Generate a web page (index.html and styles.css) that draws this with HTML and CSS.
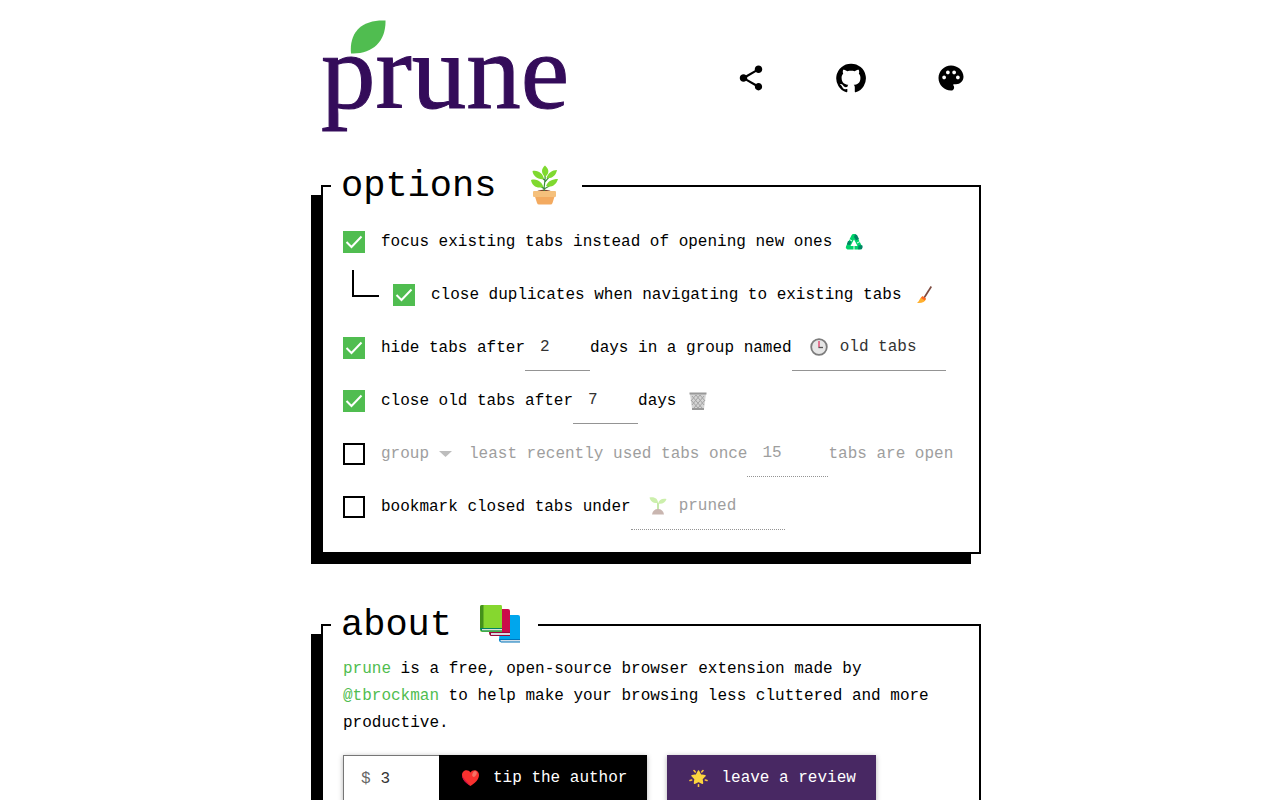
FILE: index.html
```html
<!DOCTYPE html>
<html lang="en">
<head>
<meta charset="utf-8">
<title>prune</title>
<meta name="viewport" content="width=device-width, initial-scale=1">
<link rel="stylesheet" href="styles.css">
</head>
<body>
<main class="page">
  <header class="header">
    <h1 class="logo">prune
      <svg class="leaf" viewBox="0 0 36 34" aria-hidden="true"><path d="M1 33.500C-1 12 12-.5 35.500.500 36 22 22 34.500 1 33.500Z" fill="#50bd50"/></svg>
    </h1>
    <nav class="links">
      <a class="icon-link" href="#share" aria-label="share"><svg viewBox="0 0 24 24"><path d="M18 16.080c-.76 0-1.440.3-1.960.770L8.910 12.700c.05-.23.090-.46.090-.7s-.04-.47-.09-.7l7.050-4.110c.54.5 1.250.810 2.040.810 1.660 0 3-1.340 3-3s-1.340-3-3-3-3 1.340-3 3c0 .24.040.47.090.7L8.040 9.810C7.500 9.310 6.790 9 6 9c-1.660 0-3 1.340-3 3s1.340 3 3 3c.79 0 1.500-.31 2.040-.81l7.120 4.160c-.05.21-.08.43-.08.650 0 1.610 1.310 2.920 2.920 2.920s2.920-1.310 2.920-2.920-1.310-2.920-2.920-2.920z"/></svg></a>
      <a class="icon-link github" href="#github" aria-label="github"><svg viewBox="0 0 24 24"><path d="M12 1.270a11 11 0 00-3.480 21.460c.55.090.73-.28.730-.55v-1.840c-3.030.640-3.670-1.460-3.670-1.460-.55-1.290-1.280-1.650-1.280-1.650-.92-.65.1-.65.1-.65 1.100 0 1.730 1.100 1.730 1.100.92 1.650 2.570 1.200 3.210.920a2 2 0 01.64-1.470c-2.470-.27-5.040-1.190-5.040-5.500 0-1.100.46-2.100 1.200-2.840a3.760 3.760 0 010-2.930s.91-.28 3.110 1.100c1.800-.49 3.700-.49 5.500 0 2.100-1.380 3.020-1.100 3.020-1.100a3.760 3.760 0 01.1 2.930c.83.740 1.200 1.740 1.200 2.940 0 4.210-2.570 5.130-5.040 5.400.45.370.82.920.82 2.020v3.030c0 .27.1.640.73.550A11 11 0 0012 1.270"/></svg></a>
      <a class="icon-link" href="#theme" aria-label="theme"><svg viewBox="0 0 24 24"><path d="M12 2C6.490 2 2 6.490 2 12s4.490 10 10 10c1.380 0 2.500-1.120 2.500-2.500 0-.61-.23-1.200-.64-1.670-.08-.1-.13-.21-.13-.33 0-.28.220-.5.500-.5H16c3.310 0 6-2.690 6-6C22 6.040 17.510 2 12 2zM6.500 13C5.670 13 5 12.330 5 11.500S5.670 10 6.500 10 8 10.670 8 11.500 7.330 13 6.500 13zM9.500 9C8.670 9 8 8.330 8 7.500S8.670 6 9.500 6s1.500.67 1.500 1.500S10.330 9 9.500 9zM14.500 9c-.83 0-1.500-.67-1.500-1.500S13.670 6 14.500 6 16 6.670 16 7.500 15.330 9 14.500 9zM17.500 13c-.83 0-1.500-.67-1.500-1.500s.67-1.500 1.500-1.500 1.500.67 1.500 1.500-.67 1.500-1.500 1.500z"/></svg></a>
    </nav>
  </header>

  <fieldset class="panel">
    <legend class="title">options
      <svg viewBox="0 0 40 40" aria-hidden="true">
        <path d="M9 28Q20 21 31 28Z" fill="#7b4632"/>
        <path d="M20.500 27C19 22 22 16 21 9M20 24Q25 22 28 18M20.500 24Q15 20 13 18M21 17Q24 13 27 10M20.500 15Q16 11 13 9" fill="none" stroke="#3a8c3a" stroke-width="1.200"/>
        <path d="M21 .500C26 5 25 9 21 12 17 8 17 4 21 .500ZM33 5C32 11 27 14 22.500 13 24 8 28 5 33 5ZM8.500 6C15 5 19 9 20 14 14 15 9 11 8.500 6ZM34 14C32 21 26 23 22 21 24 16 28 14 34 14ZM7 15C14 13 18 18 19.500 22 13 24 8 21 7 15Z" fill="#7fd92f"/>
        <path d="M10.500 30h20.500l-2.500 8q-.5 1.500-2 1.500H15q-1.500 0-2-1.500Z" fill="#f3aa60"/>
        <rect x="9" y="26" width="23" height="6" rx="1" fill="#f5c07c"/>
      </svg>
    </legend>

    <div class="row">
      <input class="check" type="checkbox" id="focus" checked>
      <label for="focus">focus existing tabs instead of opening new ones</label>
      <svg class="emoji" viewBox="0 0 18 18" aria-hidden="true"><path d="M8.500 3.300 3 14.300H15L9.500 3.300Z" fill="none" stroke="#00d26a" stroke-width="4.400" stroke-linejoin="round"/><path d="M10 1.200 12 2 14 6 11 7.200 9 4ZM3 8 6.500 8.500 5 12 1.800 11.500ZM13.500 12.200h3.700q1 2-.5 4H13Z" fill="#008463"/><path d="M9 6.500 12.500 13H5.500Z" fill="#fff"/><path d="M4.500 6.500l2.500 1.500M15 8.500l-3 1.500M9 17v-4" stroke="#fff" stroke-width=".9"/></svg>
    </div>
    <div class="row">
      <span class="branch"></span>
      <input class="check" type="checkbox" id="dupes" checked>
      <label for="dupes">close duplicates when navigating to existing tabs</label>
      <svg class="emoji" viewBox="0 0 18 18" aria-hidden="true"><path d="M17.300.500 10 12" stroke="#7d4b40" stroke-width="1.700"/><path d="M8 10.500 12 13C11 16 8 17.500 3 17 5.500 15.500 5.500 12 8 10.500Z" fill="#ffb02e"/><path d="M8.500 10 12 12.500 10.800 14.500 7 12Z" fill="#ff6723"/></svg>
    </div>
    <div class="row">
      <input class="check" type="checkbox" id="hide" checked>
      <label for="hide">hide tabs after</label>
      <input class="field days" type="text" value="2" aria-label="days until hidden">
      <label for="group-name">days in a group named</label>
      <span class="field named">
        <svg viewBox="0 0 18 18" aria-hidden="true"><circle cx="9" cy="9" r="7.800" fill="#e6e6e6" stroke="#7c7c7c" stroke-width="1.800"/><path d="M9 3v6.500" stroke="#e33b67" stroke-width="1.300"/><path d="M8.500 9.500H13" stroke="#555" stroke-width="1.300"/></svg>
        <input class="bare" type="text" id="group-name" value="old tabs">
      </span>
    </div>
    <div class="row">
      <input class="check" type="checkbox" id="close" checked>
      <label for="close">close old tabs after</label>
      <input class="field days" type="text" id="close-days" value="7" aria-label="days until closed">
      <label for="close-days">days</label>
      <svg class="emoji" viewBox="0 0 18 18" aria-hidden="true"><path d="M1 2h16l-2 15H3Z" fill="#d4d4d4"/><path d="M3 4l10 12M7 3l8 10M11 3l5 6M2 8l7 8M15 4 5 16M11 3 3 13M7 3 2 9M16 8l-7 8" stroke="#a4a4a4"/><path d="M.500.500h17v2H.500ZM3 16h12v2H3Z" fill="#999"/></svg>
    </div>
    <div class="row">
      <input class="check" type="checkbox" id="limit" aria-label="limit open tabs">
      <select class="picker" aria-label="action" disabled><option>group</option></select>
      <svg class="arrow" viewBox="0 0 13 6" aria-hidden="true"><path d="M0 0h13L6.500 6Z"/></svg>
      <label class="off" for="limit-count">least recently used tabs once</label>
      <input class="field count" type="text" id="limit-count" value="15" disabled>
      <span class="off">tabs are open</span>
    </div>
    <div class="row">
      <input class="check" type="checkbox" id="bookmark">
      <label for="bookmark">bookmark closed tabs under</label>
      <span class="field named idle">
        <svg viewBox="0 0 18 18" aria-hidden="true"><path d="M9 13V6" stroke="#a6dc7c" stroke-width="1.300"/><path d="M.500.500C6-.5 9 2 9 6 4 6.500 1.500 4 .500.500ZM17.500 2C13 1 10 3 9 6.500 13 7.500 16.500 5.500 17.500 2Z" fill="#ccefac"/><path d="M3 17.500Q4 12 9 12t6 5.500Z" fill="#c9b6b0"/></svg>
        <input class="bare" type="text" value="pruned" aria-label="bookmark folder" disabled>
      </span>
    </div>
  </fieldset>

  <fieldset class="panel">
    <legend class="title">about
      <svg viewBox="0 0 40 40" aria-hidden="true">
        <path d="M21 11h17q2 0 2 2v25H21q-2 0-2-2Z" fill="#00a6ed"/><path d="M20 35h20v3H21q-2-1-1-3Z" fill="#d5e0ea"/><path d="M19 35h21v1H20.500v1.500H40v1H21q-2-.5-2-3.500Z" fill="#0074ba"/>
        <path d="M12 5h16q2 0 2 2v25H12q-2 0-2-2Z" fill="#ca0b4a"/><path d="M10 28.500h20v3H11Z" fill="#d9d9e2"/><path d="M9 28h21v1H11v2h19v1H11q-2-.5-2-4Z" fill="#990839"/>
        <path d="M2 1h19q1 0 1 1.500V28H2q-2 0-2-2V3q0-2 2-2Z" fill="#86d72f"/><path d="M2 1h1.500v23H0V3q0-2 2-2Z" fill="#44911b"/><path d="M1 24.500h21v2H1Z" fill="#d9e3da"/><path d="M0 24h22v1H2v1.500h20v1H2q-2-.5-2-3.500Z" fill="#008463"/>
      </svg>
    </legend>
    <p class="blurb"><a href="#prune">prune</a> is a free, open-source browser extension made by <a href="#author">@tbrockman</a> to help make your browsing less cluttered and more productive.</p>
    <div class="actions">
      <div class="tip">
        <label class="amount"><span>$</span><input class="bare" type="text" value="3" aria-label="tip amount"></label>
        <button class="button" type="button">
          <svg viewBox="0 0 18 18" aria-hidden="true"><path d="M9 17C4 14 .5 10 .500 6 .500 1 6.500-.5 9 3.500 11.500-.5 17.500 1 17.500 6 17.500 10 14 14 9 17Z" fill="#f8312f"/><ellipse cx="13" cy="5" rx="2" ry="3" transform="rotate(25 13 5)" fill="#f37366"/><path d="M.500 6C.500 10 4 14 9 17 5 12 2 10 .500 6Z" fill="#ca0b4a"/></svg>
          tip the author
        </button>
      </div>
      <button class="button review" type="button">
        <svg viewBox="0 0 18 18" aria-hidden="true"><path d="m9 2 2.100 4 4.400.8-3.100 3.100.6 4.300L9 12.400 5 14.200l.6-4.300L2.500 6.800 6.900 6Z" fill="#fcd53f" stroke="#fcd53f" stroke-width="1.500" stroke-linejoin="round"/><path d="M4.500 1.500 5.800 3M13.500 1.500 12.200 3M.500 11.500 2.200 11M17.500 11.500 15.800 11M9 15.800V17.600" stroke="#f9c23c" stroke-width="1.600" stroke-linecap="round"/></svg>
        leave a review
      </button>
    </div>
  </fieldset>
</main>
</body>
</html>
```
FILE: styles.css
```css
* { box-sizing: border-box; }

body {
  margin: 0;
  background: #fff;
  color: #000;
  font: 16px/26px "Liberation Mono", monospace;
}

input, select, button { font: inherit; }

.page {
  max-width: 682px;
  margin: 0 auto;
  padding: 11px 0 40px 22px;
}

.header {
  display: flex;
  justify-content: space-between;
  align-items: center;
  margin-bottom: 30px;
}

.logo {
  position: relative;
  margin: 0;
  color: #340c5a;
  font: 109px/122px "Liberation Serif", serif;
  -webkit-text-stroke: 1px #340c5a;
}

.leaf {
  position: absolute;
  top: 9px;
  left: 29px;
  width: 36px;
  height: 34px;
}

.links {
  display: flex;
  gap: 40px;
  padding-top: 12px;
}

.icon-link {
  display: flex;
  justify-content: center;
  align-items: center;
  width: 60px;
  color: #000;
}

.icon-link svg {
  width: 30px;
  height: 30px;
  fill: currentColor;
}

.github svg { width: 32px; height: 32px; }

.panel {
  min-width: 0;
  margin: 0 0 48px;
  padding: 6px 20px 19px;
  border: 2px solid #000;
  box-shadow: -10px 10px 0 #000;
}

.title {
  display: flex;
  align-items: center;
  gap: 28px;
  margin-left: -12px;
  padding: 0 18px 0 10px;
  font-size: 37px;
  line-height: 46px;
}

.title svg { width: 40px; height: 40px; margin-bottom: 2px; }

.row {
  display: flex;
  align-items: center;
  height: 53px;
  white-space: nowrap;
}

.check {
  flex: none;
  appearance: none;
  width: 22px;
  height: 22px;
  margin: 0 16px 0 0;
  border: 2px solid #000;
}

.check:checked {
  border: 0;
  background: #50bd50 url("data:image/svg+xml,%3Csvg xmlns='http://www.w3.org/2000/svg' viewBox='0 0 22 22'%3E%3Cpath d='M3.500 11l5 5L18.500 5.500' fill='none' stroke='white' stroke-width='2'/%3E%3C/svg%3E");
}

.branch {
  align-self: flex-start;
  width: 27px;
  height: 27px;
  margin: 2px 14px 0 9px;
  border: solid #000;
  border-width: 0 0 2px 2px;
}

.emoji {
  flex: none;
  width: 18px;
  height: 18px;
  margin-left: 13px;
}

.field {
  height: 46px;
  padding: 0 0 0 15px;
  border: 0;
  border-bottom: 1px solid #949494;
  border-radius: 0;
  background: none;
  color: #333;
}

.days { width: 65px; }
.count { width: 81px; }

.named {
  display: flex;
  align-items: center;
  gap: 12px;
  width: 154px;
  padding-left: 18px;
}

.named svg { flex: none; width: 18px; height: 18px; }

.bare {
  width: 100%;
  min-width: 0;
  padding: 0;
  border: 0;
  background: none;
  color: #333;
}

.idle, .field:disabled { border-bottom-style: dotted; }

.off, .bare:disabled, .field:disabled, .picker:disabled { color: #9e9e9e; opacity: 1; }

.picker {
  appearance: none;
  width: 58px;
  padding: 0;
  border: 0;
  background: none;
}

.arrow {
  width: 13px;
  height: 6px;
  margin-right: 17px;
  fill: #bdbdbd;
}

.blurb {
  margin: 0 0 18px;
  padding-top: 2px;
  line-height: 27px;
}

.blurb a { color: #50bd50; text-decoration: none; }

.actions { display: flex; gap: 20px; }

.tip {
  display: flex;
  box-shadow: 0 1px 5px rgba(0, 0, 0, .3);
}

.amount {
  display: flex;
  align-items: center;
  gap: 10px;
  width: 96px;
  padding: 0 10px 0 17px;
  border: 1px solid #767676;
  border-right: 0;
  color: #666;
}

.button {
  display: flex;
  align-items: center;
  gap: 13px;
  height: 48px;
  padding: 0 20px 2px 22px;
  border: 0;
  background: #000;
  color: #fff;
  white-space: nowrap;
}

.button svg { width: 19px; height: 18px; }

.review {
  background: #482863;
  box-shadow: 0 1px 5px rgba(0, 0, 0, .3);
}
```
